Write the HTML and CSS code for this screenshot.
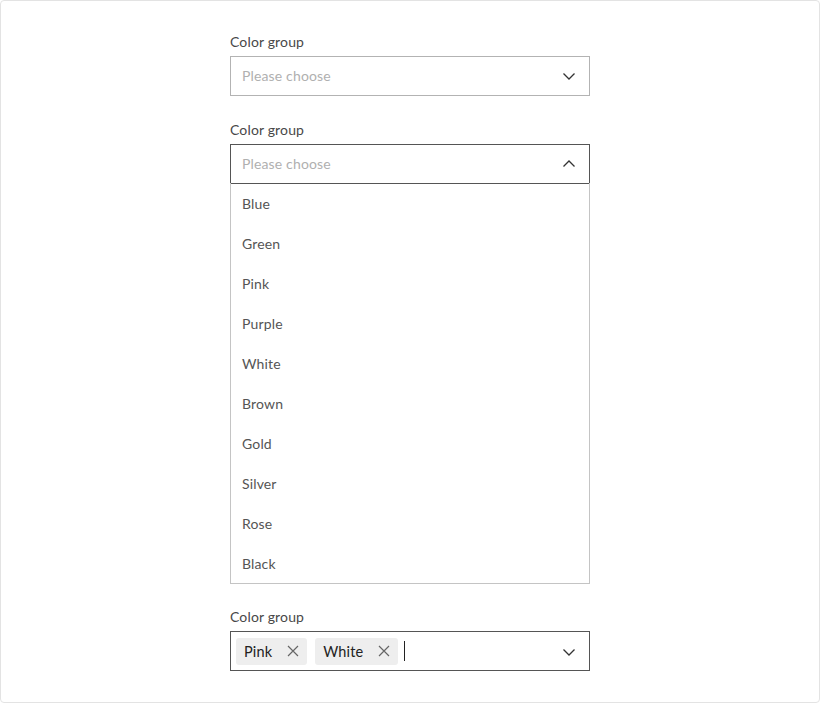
FILE: index.html
```html
<!DOCTYPE html>
<html lang="en">
<head>
<meta charset="utf-8">
<title>Color group select</title>
<link rel="stylesheet" href="styles.css">
</head>
<body>
<div class="frame">
  <div class="column">
    <div class="field">
      <label class="label">Color group</label>
      <div class="select">
        <span class="placeholder">Please choose</span>
        <svg class="chevron" width="14" height="8" viewBox="0 0 14 8"><path d="M1.5 1.5l5.5 5.5 5.5-5.5" fill="none" stroke="#333" stroke-width="1.3"/></svg>
      </div>
    </div>

    <div class="field">
      <label class="label">Color group</label>
      <div class="select select-open">
        <span class="placeholder">Please choose</span>
        <svg class="chevron" width="14" height="8" viewBox="0 0 14 8"><path d="M1.5 6.5l5.5-5.5 5.5 5.5" fill="none" stroke="#333" stroke-width="1.3"/></svg>
      </div>
      <ul class="options">
        <li>Blue</li>
        <li>Green</li>
        <li>Pink</li>
        <li>Purple</li>
        <li>White</li>
        <li>Brown</li>
        <li>Gold</li>
        <li>Silver</li>
        <li>Rose</li>
        <li>Black</li>
      </ul>
    </div>

    <div class="field field-last">
      <label class="label">Color group</label>
      <div class="select select-multi">
        <span class="chip">Pink<svg class="chip-x" width="12" height="12" viewBox="0 0 12 12"><path d="M1 1l10 10M11 1L1 11" stroke="#666" stroke-width="1.2"/></svg></span>
        <span class="chip">White<svg class="chip-x" width="12" height="12" viewBox="0 0 12 12"><path d="M1 1l10 10M11 1L1 11" stroke="#666" stroke-width="1.2"/></svg></span>
        <span class="caret"></span>
        <svg class="chevron" width="14" height="8" viewBox="0 0 14 8"><path d="M1.5 1.5l5.5 5.5 5.5-5.5" fill="none" stroke="#333" stroke-width="1.3"/></svg>
      </div>
    </div>
  </div>
</div>
</body>
</html>
```

FILE: styles.css
```css
* { box-sizing: border-box; }

html, body {
  margin: 0;
  padding: 0;
  background: #fff;
}

body {
  font-family: Lato, "Noto Sans", "Liberation Sans", sans-serif;
  font-size: 14px;
  letter-spacing: 0.15px;
  color: #484848;
}

.frame {
  width: 820px;
  height: 703px;
  border: 1px solid #e3e3e3;
  border-radius: 4px;
  padding-top: 31px;
}

.column {
  width: 360px;
  margin-left: 229px;
  display: flex;
  flex-direction: column;
  gap: 24px;
}

.field {
  display: flex;
  flex-direction: column;
}

.field-last {
  margin-top: -1px;
}

.label {
  display: block;
  line-height: 20px;
  margin-bottom: 4px;
  color: #484848;
}

.select {
  height: 40px;
  border: 1px solid #b3b3b3;
  display: flex;
  align-items: center;
  padding: 0 13px 2px 11px;
}

.select .chevron {
  margin-bottom: -2px;
}

.select-open,
.select-multi {
  border-color: #555;
}

.placeholder {
  flex: 1;
  color: #b0b0b0;
}

.chevron {
  margin-left: auto;
  flex-shrink: 0;
}

.options {
  list-style: none;
  margin: 0;
  padding: 0;
  border: 1px solid #c4c4c4;
  border-top: none;
  margin-top: -1px;
}

.options li {
  height: 40px;
  line-height: 38px;
  padding: 2px 0 0 11px;
  color: #555;
}

.select-multi {
  padding-left: 5px;
  padding-bottom: 0;
}

.chip {
  display: inline-flex;
  align-items: center;
  height: 27px;
  padding: 0 8px;
  background: #eeeeee;
  border-radius: 3px;
  color: #222;
  font-size: 14.5px;
  margin-right: 8px;
}

.chip-x {
  margin-left: 15px;
}

.caret {
  width: 1px;
  height: 20px;
  background: #222;
  margin-left: -2px;
}
```
